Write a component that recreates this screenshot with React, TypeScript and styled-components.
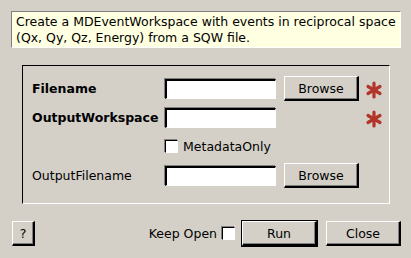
import styled, { createGlobalStyle } from "styled-components";

const Global = createGlobalStyle`
    html, body { margin: 0; padding: 0; background: #d4d0c8; }
    body { font-family: "DejaVu Sans", sans-serif; font-size: 12.5px; color: #000; }
`;

const Dialog = styled.div`
    width: 411px; height: 258px; box-sizing: border-box; padding: 11px 10px 0 11px;
    display: flex; flex-direction: column;
`;

const Description = styled.div`
    width: 390px; height: 37px; box-sizing: border-box; padding: 2px 4px;
    background: #ffffe1; line-height: 16px;
    border-top: 1px solid #808080; border-left: 1px solid #808080;
    border-bottom: 1px solid #ffffff; border-right: 1px solid #ffffff;
`;

const Group = styled.div`
    margin: 17px 0 0 11px; width: 368px; height: 139px; box-sizing: border-box;
    padding: 10px 0 0 9px;
    border-top: 1px solid #000; border-left: 1px solid #000;
    border-bottom: 1px solid #fff; border-right: 1px solid #fff;
    display: grid; grid-template-columns: 124px 112px 75px 24px;
    grid-auto-rows: 25px; column-gap: 8px; row-gap: 4px; align-items: center;
`;

const Label = styled.div<{ $bold?: boolean }>`
    font-weight: ${p => (p.$bold ? "bold" : "normal")};
    white-space: nowrap;
`;

const Field = styled.div`
    height: 20px; box-sizing: border-box; background: #fff;
    border-top: 2px solid #000; border-left: 2px solid #000;
    border-bottom: 1px solid #fff; border-right: 1px solid #fff;
    box-shadow: -1px -1px 0 #808080;
    margin-left: 1px;
`;

const Button = styled.button<{ $default?: boolean }>`
    font: inherit; color: #000; background: #d4d0c8; height: 25px; padding: 0;
    box-sizing: border-box; cursor: default;
    border-top: 1px solid #fff; border-left: 1px solid #fff;
    border-bottom: 2px solid #000; border-right: 2px solid #000;
    box-shadow: inset -1px -1px 0 #808080;
    ${p => p.$default && `outline: 1px solid #000;`}
`;

const Check = styled.span`
    display: inline-block; width: 13px; height: 13px; box-sizing: border-box; background: #fff;
    border-top: 1px solid #000; border-left: 1px solid #000;
    border-bottom: 1px solid #fff; border-right: 1px solid #fff;
    box-shadow: -1px -1px 0 #808080;
`;

const CheckRow = styled.div`
    grid-column: 2 / 4; display: flex; align-items: center; gap: 5px; padding-left: 1px;
`;

const Star = () => (
    <svg width="18" height="18" viewBox="0 0 18 18" style={{ marginLeft: "-2px", marginTop: "3px" }}>
        <g stroke="#b3352a" strokeWidth="3.2" strokeLinecap="round">
            <line x1="9" y1="2" x2="9" y2="16" />
            <line x1="3" y1="5.5" x2="15" y2="12.5" />
            <line x1="3" y1="12.5" x2="15" y2="5.5" />
        </g>
    </svg>
);

const Footer = styled.div`
    margin-top: 17px; display: flex; align-items: center; padding-left: 1px;
`;

const Spacer = styled.div` flex: 1; `;

const KeepOpen = styled.div`
    display: flex; align-items: center; gap: 5px; margin-right: 7px;
`;

export default function App() {
    return (
        <Dialog>
            <Global />
            <Description>
                Create a MDEventWorkspace with events in reciprocal space<br />
                (Qx, Qy, Qz, Energy) from a SQW file.
            </Description>
            <Group>
                <Label $bold>Filename</Label>
                <Field />
                <Button style={{ width: 75 }}>Browse</Button>
                <Star />

                <Label $bold>OutputWorkspace</Label>
                <Field />
                <div />
                <Star />

                <div />
                <CheckRow><Check />MetadataOnly</CheckRow>
                <div />

                <Label>OutputFilename</Label>
                <Field />
                <Button style={{ width: 75 }}>Browse</Button>
                <div />
            </Group>
            <Footer>
                <Button style={{ width: 23 }}>?</Button>
                <Spacer />
                <KeepOpen>Keep Open <Check /></KeepOpen>
                <Button $default style={{ width: 75 }}>Run</Button>
                <Button style={{ width: 75, marginLeft: 9 }}>Close</Button>
            </Footer>
        </Dialog>
    );
}
